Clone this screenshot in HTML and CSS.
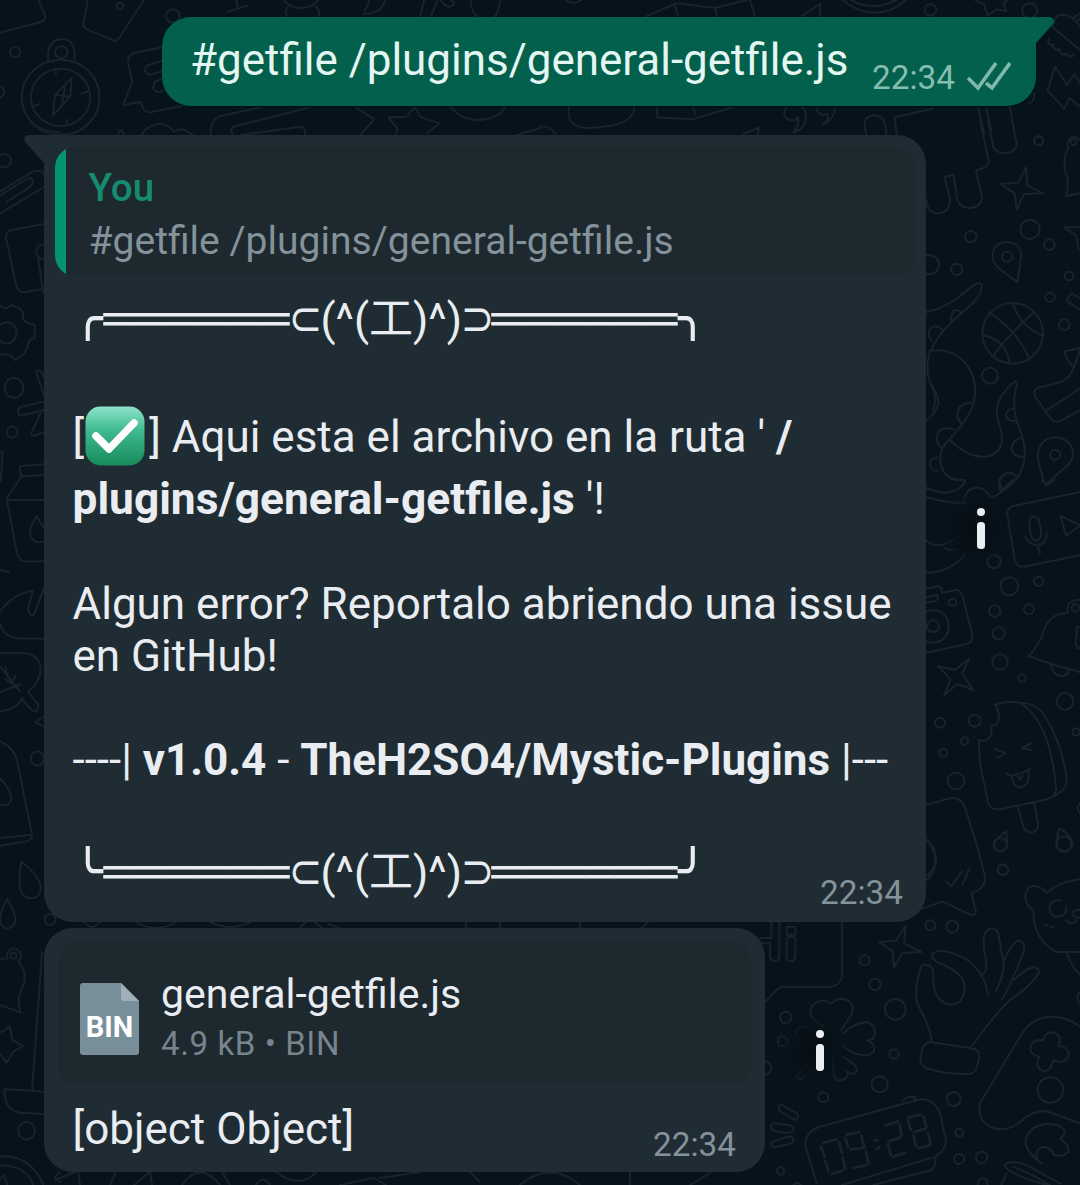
FILE: index.html
```html
<!DOCTYPE html>
<html lang="es">
<head>
<meta charset="utf-8">
<title>Chat</title>
<link rel="stylesheet" href="styles.css">
</head>
<body>
<svg class="wallpaper" viewBox="0 0 1080 1185" aria-hidden="true">
  <!-- top left: compass, speech bubble, notes -->
  <g transform="scale(.34436 .33333)">
    <path d="M0 98L118 66Q136 58 130 44L112 0M255 0L243 66Q240 82 252 88L330 122Q340 124 346 114L418 0M662 36L718 16M686 0L690 24M824 0Q840 24 874 24T924 0M832 48Q826 34 836 22M926 48Q930 34 918 20M1118 0Q1110 40 1056 42M1072 0Q1068 20 1058 30M1220 48L1232 0M1252 48L1270 0M1280 0Q1296 26 1312 18T1310 0M1366 0Q1370 40 1386 50M1452 0Q1448 40 1436 50"/>
    <circle cx="348" cy="18" r="10"/><circle cx="502" cy="48" r="20"/><circle cx="44" cy="157" r="15"/><circle cx="178" cy="157" r="18"/><circle cx="12" cy="482" r="20"/><circle cx="-6" cy="275" r="18"/>
    <circle cx="176" cy="292" r="113"/><circle cx="176" cy="292" r="86"/>
    <path d="M140 182Q134 120 178 118T216 182M208 234L160 284L153 346L204 290ZM160 284L204 290M188 262L180 318M162 206V222M238 280L256 274M194 358V374M98 318L116 312"/>
    <path d="M470 142L386 160Q370 166 372 188L384 246L358 314L410 306Q414 340 440 336L545 314M470 182L434 194Q418 200 422 214Q430 228 444 222L470 214M470 236L450 246Q440 262 450 272Q460 280 476 272"/>
    <path d="M612 405Q610 350 650 346L760 322M676 405Q664 384 686 378L900 322M700 405L870 380Q890 380 886 405M412 405Q430 370 470 372Q500 380 504 396Q530 378 560 405M342 405Q350 376 360 405M1034 322L1086 358L1046 405M1204 322L1180 350L1128 352L1154 386L1150 405M1204 322L1222 352L1276 370L1240 400M1310 322Q1340 360 1390 360Q1450 355 1466 322M1500 405L1568 385"/>
    <path d="M0 574L90 518Q124 500 136 540M0 640L130 560M18 606L86 562Q102 545 92 536Q84 530 70 542L0 586M128 672L34 690Q14 696 18 716L46 852Q52 880 74 876L128 866M128 732Q102 736 106 760Q116 780 128 776M110 770L126 880"/>
  </g>
  <!-- top right: star, mouse, cube, tabletop -->
  <g transform="translate(540) scale(.34436 .33333)">
    <path d="M310 48L396 10L508 24L600 0M390 10L400 44M508 24L514 48M610 0L624 48M760 48L814 12L812 48M880 0Q920 38 972 38T1062 0M904 0Q940 20 972 18T1034 0M1264 0L1290 14L1300 46L1326 28L1354 34L1346 8L1358 0M76 0Q96 18 120 0"/>
    <circle cx="1134" cy="30" r="17"/><circle cx="1422" cy="32" r="22"/><circle cx="1448" cy="423" r="13"/>
    <path d="M84 322Q74 384 142 384Q272 380 274 322M340 322L340 352L444 358L560 322M444 322L452 342M716 322Q698 350 726 360Q744 364 748 350Q756 372 736 398Q774 384 772 350Q772 326 760 322M802 322Q804 340 822 344L834 342Q842 360 820 374Q856 358 856 322M0 380Q24 374 46 402M590 402L638 382L632 402M948 402Q930 350 970 346Q1004 346 1006 402M1036 402L1030 352L1140 326M1420 310Q1440 300 1434 280"/>
    <path d="M1272 322L1290 400M1296 322L1310 390"/>
    <path d="M1488 80L1500 50Q1524 34 1550 58L1568 80M1488 80L1568 150M1478 118Q1470 136 1490 134Q1488 152 1508 148Q1510 168 1530 162Q1540 176 1552 164M1546 56L1568 40M1556 66L1568 56M1496 200L1474 272L1522 326L1538 294L1568 320M1496 200L1530 254L1552 222L1568 250"/>
  </g>
  <!-- right edge: location pins, ball, octopus -->
  <g transform="translate(920 120) scale(.33333)">
    <path d="M180 0L206 122Q204 140 190 144L168 152L186 232Q184 260 152 264Q120 264 112 240L100 164L74 170L90 240Q90 276 56 280Q20 280 20 240M204 0L220 80Q230 102 260 100Q290 94 290 70L276 0L270 -40"/>
    <path d="M318 142L322 196L368 220L312 222L290 268L284 220L242 192L296 188ZM480 322H432L468 346L476 390M480 60A18 18 0 1 0 446 84Q428 110 436 156Q450 180 438 228L480 220"/>
    <circle cx="461" cy="67" r="9"/><circle cx="356" cy="62" r="14"/><circle cx="330" cy="328" r="29"/><circle cx="152" cy="350" r="17"/><circle cx="388" cy="374" r="16"/><circle cx="110" cy="448" r="17"/><circle cx="28" cy="434" r="29"/><circle cx="447" cy="468" r="13"/><circle cx="390" cy="532" r="14"/><circle cx="433" cy="614" r="16"/><circle cx="210" cy="767" r="24"/><circle cx="261" cy="410" r="15"/><circle cx="405" cy="1004" r="15"/>
    <path d="M292 486L240 448Q214 424 218 400Q224 366 262 366Q300 368 304 406ZM376 1094Q350 1020 354 995Q366 952 408 952Q454 958 460 1000Q458 1024 436 1042Z"/>
    <circle cx="278" cy="640" r="91"/><path d="M208 578Q290 630 326 712M278 549Q300 620 370 648M340 578Q270 640 220 706M190 646Q260 660 268 730"/>
    <path d="M20 576Q90 560 146 506Q184 476 186 500Q184 530 140 566Q50 640 34 692Q100 684 142 736Q184 800 152 872Q130 916 90 956Q50 996 64 1040Q80 1084 130 1080Q142 1080 132 1090Q112 1118 70 1118Q36 1112 20 1104M30 692Q14 750 32 790Q52 820 56 850Q48 880 20 900M30 790Q54 830 40 870M90 960Q150 1020 210 1008Q258 990 242 926Q220 870 240 836Q270 790 286 784Q294 790 286 810Q274 870 300 930Q330 1010 296 1068Q270 1104 218 1132M34 664Q20 640 32 624Q52 612 68 630M94 602Q92 570 110 570Q122 570 124 582M128 914Q100 890 120 860Q140 844 162 852M64 984Q40 960 56 934Q74 918 104 930M52 1054Q30 1050 30 1030Q34 1014 52 1012M290 902Q260 906 258 884Q264 864 280 868M310 1012Q280 1010 274 986Q278 960 302 954M240 1112Q230 1070 260 1060Q280 1056 290 1070M130 1150Q134 1110 162 1104Q194 1100 212 1132M20 1132Q80 1150 138 1150"/>
    <path d="M480 535L456 520Q440 530 442 545L480 568M480 684L434 694Q440 726 462 740Q480 700 480 684M462 740Q450 780 410 790L350 804Q340 812 346 830L376 874L480 806M376 874L398 902Q410 910 424 902L480 870"/>
  </g>
  <!-- voice note, camera, bell, ice pop -->
  <g transform="translate(920 480) scale(.33333)">
    <path d="M480 36L280 78Q258 86 262 104L284 240Q292 264 312 260L480 226M328 124Q330 106 346 110Q356 112 358 126L364 160Q362 180 350 182Q336 180 332 164ZM316 170Q326 196 352 196Q382 190 380 156M352 196L360 220M422 108L480 136L438 168ZM20 182Q50 210 100 180L150 140M20 278Q90 278 136 222M76 204Q86 214 104 208M236 0L246 30L280 0M366 0L380 16L404 0"/>
    <path d="M20 326L56 318Q66 322 66 338L110 330Q124 332 128 350L158 468Q158 486 140 492L20 518M20 352L50 344Q60 352 48 362L20 368M20 394Q60 380 82 416Q96 460 64 482Q40 492 20 484"/>
    <circle cx="39" cy="439" r="18"/><circle cx="98" cy="367" r="11"/><circle cx="222" cy="245" r="20"/><circle cx="268" cy="319" r="27"/><circle cx="356" cy="304" r="14"/><circle cx="224" cy="393" r="17"/><circle cx="327" cy="388" r="15"/><circle cx="236" cy="460" r="18"/><circle cx="240" cy="546" r="23"/><circle cx="306" cy="594" r="11"/><circle cx="435" cy="664" r="25"/><circle cx="468" cy="756" r="11"/><circle cx="60" cy="728" r="15"/><circle cx="164" cy="722" r="18"/><circle cx="134" cy="783" r="11"/><circle cx="70" cy="818" r="12"/><circle cx="108" cy="903" r="25"/><circle cx="248" cy="1169" r="16"/><circle cx="466" cy="384" r="11"/>
    <path d="M480 360Q440 356 442 400Q390 400 372 450Q356 500 326 528Q390 554 480 576M392 556Q400 590 426 588Q444 584 450 570M480 440Q462 440 472 466Q460 490 474 504H480M148 536L126 580L160 630L112 612L72 646L92 598L54 558L104 570Z"/>
    <path d="M226 674Q240 700 236 720Q230 736 214 738Q218 770 200 780Q188 784 176 780L180 850L204 968Q210 990 240 988L380 958Q410 948 408 924Q390 720 298 668Q260 662 226 674M298 668Q350 668 376 710Q430 800 440 900Q440 930 400 950M294 982L310 1040Q320 1062 340 1056Q356 1050 354 1030L342 968M224 806L256 820L232 834M334 790L306 804L334 810M260 880L272 888Q300 880 318 874L330 866M274 888Q280 924 304 922Q330 914 326 874M294 890L300 898L308 886M258 1054Q220 1084 222 1096Q228 1114 244 1114Q266 1106 262 1086ZM418 1046Q408 1074 410 1096Q418 1114 436 1114Q456 1108 458 1090Q450 1060 418 1046ZM20 974L84 956Q120 948 134 980L166 1080M20 1080Q50 1104 48 1140Q44 1170 20 1188M480 970Q466 985 480 1000"/>
  </g>
  <!-- bottom right: hand, clover, clock, gamepad -->
  <g transform="translate(760 840) scale(.33333)">
    <path d="M646 0L676 112Q676 146 634 160L648 216Q642 230 626 222L548 184L486 206M502 0Q530 40 526 70Q520 104 500 120M558 124L574 138L606 94M608 134L628 86"/>
    <path d="M246 244V410Q240 438 212 440H64Q40 456 16 486M0 294H34V246M58 246V350Q58 362 46 362Q30 362 30 350V310H0M80 260H106V284H80ZM80 298Q80 290 92 290Q106 290 106 298V350Q104 364 92 364Q78 360 80 350Z"/>
    <path d="M436 258L432 310L484 336L428 338L402 382L398 334L358 306L408 302Z"/>
    <circle cx="721" cy="14" r="20"/><circle cx="912" cy="12" r="23"/><circle cx="729" cy="90" r="15"/><circle cx="511" cy="256" r="15"/><circle cx="577" cy="260" r="18"/><circle cx="314" cy="361" r="15"/><circle cx="345" cy="433" r="17"/><circle cx="406" cy="508" r="31"/><circle cx="77" cy="532" r="17"/><circle cx="68" cy="604" r="15"/><circle cx="402" cy="642" r="14"/><circle cx="359" cy="733" r="24"/><circle cx="190" cy="772" r="15"/><circle cx="581" cy="777" r="21"/><circle cx="598" cy="878" r="12"/><circle cx="597" cy="957" r="15"/><circle cx="665" cy="952" r="17"/><circle cx="62" cy="993" r="11"/><circle cx="14" cy="684" r="20"/><circle cx="871" cy="750" r="38"/><circle cx="668" cy="1030" r="15"/>
    <path d="M514 606Q516 570 474 496Q460 460 480 390Q484 370 500 374Q516 376 520 396Q516 450 536 474Q570 510 602 482Q626 446 604 412Q580 384 530 366Q510 350 518 340Q540 324 590 344Q650 366 676 430L684 466M670 402Q684 390 676 350Q664 300 678 274Q698 254 714 276Q724 330 732 380Q726 420 708 452M732 362Q750 320 770 302Q796 300 792 330Q780 370 760 410Q744 450 726 478M764 418Q790 390 820 382Q840 384 836 400Q810 440 750 480Q690 540 636 618M510 606L630 624Q660 628 658 650L650 684Q644 702 624 702Q560 704 498 684Q478 672 482 650Q486 610 510 606Z"/>
    <path d="M214 492Q196 476 170 486Q140 506 158 536Q176 550 190 560M214 492Q230 470 262 480Q290 500 270 530L244 570M250 580Q280 550 320 546Q350 556 344 586Q340 598 322 602Q346 610 342 634Q326 652 290 642Q260 630 246 616M250 650L280 672Q300 690 282 700Q270 704 262 694Q270 716 236 722Q216 716 220 680V640M160 570Q110 550 108 580Q110 596 122 602Q100 610 106 626Q124 640 150 628M150 670L108 710L120 720L164 686"/>
    <path d="M860 158L850 148Q800 120 796 170Q800 200 820 212Q820 300 890 336H960M860 158Q900 124 960 118M918 200A25 25 0 1 1 902 182M960 210Q936 208 938 226Q950 236 960 232M918 240Q932 260 950 240M852 256H862M872 260H882M920 338Q934 380 960 404M960 456Q944 470 960 492"/>
    <path d="M960 560Q920 528 868 530Q810 536 780 590L660 790Q650 846 700 864Q740 876 780 846Q830 800 880 820L960 850M850 600C854 582 868 572 886 580C902 588 902 600 896 618C918 620 932 634 924 650C914 668 898 670 880 660C874 686 864 698 846 692C828 684 830 668 838 650C818 648 806 632 814 614C822 598 836 600 850 600M844 970Q790 930 798 896Q814 850 870 852Q914 856 914 880Q910 892 900 896Q930 914 924 936Q906 954 882 944Q872 922 852 920Q830 924 828 948Q832 962 844 970M724 1035L740 1000M734 976Q750 956 800 976L900 1030M734 976Q740 1000 860 1035M760 980Q810 1000 870 1035"/>
    <path d="M170 1030L136 916Q134 880 174 862L480 778Q520 774 540 820L558 900Q560 930 526 950L246 1035M430 782Q434 770 464 770L468 780M526 950Q530 990 500 994L340 1035M56 796Q64 790 74 800L110 820Q120 832 110 838Q96 840 84 828L58 812ZM40 850L90 856Q106 864 98 876Q80 880 40 872Q24 860 40 850ZM36 906L90 888Q106 896 96 910L46 922Q28 920 36 906ZM100 1035Q112 1024 124 1035"/>
    <path class="digits" d="M190 908L230 898M182 918L194 950M238 908L246 940M196 964L206 996M248 952L256 986M214 1002L248 992M260 884L298 876M256 894L264 920M304 886L314 924M272 928L308 924M318 936L326 970M282 984L318 976M344 902L352 900M350 926L358 922M376 856L414 844M420 854L424 886M386 904L420 892M384 912L392 944M400 950L436 938M446 832L482 824M444 842L452 870M490 830L500 862M462 876L496 866M460 886L468 920M504 880L512 912M476 924L510 916"/>
  </g>
  <!-- left edge: photo frame, gear, carton, leaf -->
  <g transform="translate(0 120) scale(.33333 .35714)">
    <path d="M90 0Q110 30 180 34M0 520Q18 536 34 518L60 528L70 540Q64 556 80 568L104 574V610Q82 614 84 634L70 658L44 672Q30 650 0 658M132 720Q118 690 108 706L132 770M132 788L60 804Q48 814 60 828L132 812M122 820L94 876Q94 886 104 884L132 874M132 964L66 968Q56 970 60 980L64 998L132 994M64 998L20 1060L50 1210Q56 1236 76 1236H132M20 1064H132M0 930H8L2 1012M110 1110Q84 1146 92 1166Q102 1184 122 1182L132 1180M110 1110L130 1140M0 1260L28 1266M0 1376Q40 1326 98 1318L84 1370Q88 1390 102 1386L132 1310M0 1410Q12 1450 60 1452H132"/>
    <circle cx="20" cy="596" r="30"/><circle cx="42" cy="750" r="28"/><circle cx="37" cy="874" r="16"/>
  </g>
  <g transform="translate(0 640) scale(.33333 .34758)">
    <path d="M0 38H80Q120 46 122 86Q120 120 84 150L112 182Q120 200 104 206Q92 204 66 168Q50 200 0 206M0 150L60 128M46 102L36 126L16 112M0 76L60 148M16 76L22 104M132 220L106 236L132 250M0 290Q46 314 52 350L96 560Q98 576 76 580L0 592M0 570L96 560M0 398Q34 430 34 460Q24 480 0 474M64 638Q54 690 62 722Q76 748 100 742Q124 738 122 706Q110 670 64 638ZM22 746Q0 780 0 806Q4 830 24 830Q46 824 46 800Q40 770 22 746M0 918L22 916A21 21 0 1 1 54 926Q80 950 72 990Q46 1034 62 1072L0 1050M0 1130L30 1112L36 1150L68 1168L40 1184L20 1216L0 1190M126 900L96 1296M132 1300L14 1292Q10 1350 60 1360L132 1364M0 1486Q90 1480 130 1568M0 1512Q80 1512 100 1568M0 1550L12 1540L22 1568M180 1530L164 1546L180 1560"/>
    <circle cx="112" cy="341" r="20"/><circle cx="150" cy="804" r="16"/><circle cx="40" cy="908" r="9"/><circle cx="80" cy="1412" r="25"/>
  </g>
  <!-- slivers between and under the bubbles -->
  <path d="M84 922Q92 932 100 922M136 922Q156 934 176 922M210 922Q230 932 250 922M300 928L310 918L322 928M328 924L340 928M466 920V930M500 920V930M580 920V930M640 930L650 920M55 1180L78 1171L80 1185M110 1185L116 1172M134 1185L150 1172L152 1185M182 1185Q200 1160 220 1185M222 1172L230 1185M256 1185Q262 1174 270 1185M276 1172Q300 1190 316 1172M340 1185L374 1178L386 1185M380 1178L420 1172M470 1172L480 1182M520 1185Q550 1160 580 1185M630 1172V1185M690 1185L710 1173"/>
  <defs><radialGradient id="halo"><stop offset="0" stop-color="#080d14"/><stop offset=".55" stop-color="#080f17" stop-opacity=".75"/><stop offset="1" stop-color="#06131a" stop-opacity="0"/></radialGradient></defs>
  <g class="halo"><circle cx="974" cy="529" r="38"/><circle cx="813" cy="1051" r="38"/></g>
</svg>

<main class="chat">
  <section class="row row-out">
    <div class="bubble bubble-out">
      <svg class="tail tail-out" viewBox="0 0 24 34"><path d="M0 0H18Q24 2 21 7L4 26V34H0Z"/></svg>
      <p class="command">#getfile /plugins/general-getfile.js</p>
      <span class="time time-out">22:34</span>
      <svg class="ticks" viewBox="0 0 44 29"><path d="M1 16L11 26L29 1M19 21L25 26L43 1"/></svg>
    </div>
  </section>

  <section class="row row-text">
    <article class="bubble bubble-in bubble-text">
      <svg class="tail tail-in" viewBox="0 0 24 34"><path d="M24 0H4Q-2 2 2 8L20 28V34H24Z"/></svg>
      <blockquote class="quote">
        <strong class="quote-author">You</strong>
        <span class="quote-text">#getfile /plugins/general-getfile.js</span>
      </blockquote>
      <div class="message">
        <div class="banner"><span class="corner corner-top">╭</span><span class="rule">══════</span><span class="face"><span class="horn">⊂</span><span>(^(</span><span class="nose">工</span><span>)^)</span><span class="horn">⊃</span></span><span class="rule">══════</span><span class="corner corner-top">╮</span></div>
        <p class="path">[<svg class="emoji" viewBox="0 0 60 60" role="img" aria-label="✅"><defs><linearGradient id="g" x2="0" y2="1"><stop offset="0" stop-color="#8ee4cb"/><stop offset=".4" stop-color="#3fba91"/><stop offset="1" stop-color="#168b59"/></linearGradient></defs><rect x=".5" y=".5" width="59" height="59" rx="15" fill="url(#g)"/><path d="M11 30L24 43L49 17" fill="none" stroke="#fff" stroke-width="7.5" stroke-linecap="round" stroke-linejoin="round"/></svg>] Aqui esta el archivo en la ruta ' <b>/</b><br><b>plugins/general-getfile.js</b> '!</p>
        <p class="issue">Algun error? Reportalo abriendo una issue<br>en GitHub!</p>
        <p class="version">----| <b>v1.0.4</b> - <b>TheH2SO4/Mystic-Plugins</b> |---</p>
        <div class="banner"><span class="corner corner-bottom">╰</span><span class="rule">══════</span><span class="face"><span class="horn">⊂</span><span>(^(</span><span class="nose">工</span><span>)^)</span><span class="horn">⊃</span></span><span class="rule">══════</span><span class="corner corner-bottom">╯</span></div>
      </div>
      <span class="time time-in">22:34</span>
    </article>
    <svg class="info" viewBox="0 0 10 42" role="img" aria-label="Info"><circle cx="5" cy="4" r="4"/><rect x="1" y="14" width="8" height="27" rx="3.5"/></svg>
  </section>

  <section class="row row-file">
    <article class="bubble bubble-in bubble-file">
      <div class="file">
        <div class="file-icon">
          <svg viewBox="0 0 59 72"><path d="M3 0H41L59 18V69Q59 72 56 72H3Q0 72 0 69V3Q0 0 3 0Z" fill="#788f9a"/><path d="M41 0L59 18H44Q41 18 41 15Z" fill="#9fb0b8"/></svg>
          <span class="file-ext">BIN</span>
        </div>
        <div class="file-info">
          <span class="file-name">general-getfile.js</span>
          <span class="file-meta">4.9 kB • BIN</span>
        </div>
      </div>
      <div class="caption">
        <p>[object Object]</p>
        <span class="time">22:34</span>
      </div>
    </article>
    <svg class="info" viewBox="0 0 10 42" role="img" aria-label="Info"><circle cx="5" cy="4" r="4"/><rect x="1" y="14" width="8" height="27" rx="3.5"/></svg>
  </section>
</main>
</body>
</html>
```
FILE: styles.css
```css
* { box-sizing: border-box; }
html, body { margin: 0; width: 1080px; height: 1185px; overflow: hidden; }
body {
  background: #06131a;
  color: #e9edf2;
  font-family: Roboto, "Noto Sans CJK SC", sans-serif;
  font-size: 44px;
  line-height: 52px;
}
p { margin: 0; }
b { font-weight: 700; }

.wallpaper { position: absolute; inset: 0; width: 1080px; height: 1185px; }
.wallpaper path, .wallpaper circle {
  fill: none;
  stroke: #17242b;
  stroke-width: 2;
  stroke-linecap: round;
  stroke-linejoin: round;
  vector-effect: non-scaling-stroke;
}
.wallpaper .digits { stroke-width: 2.8; }
.wallpaper .halo circle { fill: url(#halo); stroke: none; }

.chat { position: relative; display: flex; flex-direction: column; padding-top: 17px; }
.row { display: flex; }
.bubble { position: relative; border-radius: 29px; white-space: nowrap; }
.tail { position: absolute; top: 0; width: 24px; height: 34px; }

.row-out { justify-content: flex-end; padding-right: 44px; }
.bubble-out {
  display: flex;
  width: 874px;
  height: 89px;
  padding-left: 28px;
  background: #02604d;
  border-top-right-radius: 0;
  box-shadow: 0 1px 1px #02120f;
}
.tail-out { right: -20px; fill: #02604d; }
.command { width: 682px; padding-top: 17px; color: #e4f6f2; font-size: 43.95px; }
.time { color: #84929b; font-size: 33.3px; line-height: 40px; }
.time-out { width: 95px; padding-top: 41px; color: #86bdb1; }
.ticks {
  width: 44px;
  height: 29px;
  margin-top: 45px;
  fill: none;
  stroke: #7fb9ad;
  stroke-width: 3.6;
}

.row-text { align-items: center; gap: 50px; margin-top: 29px; padding-left: 44px; }
.bubble-in { background: #202c33; }
.bubble-text { width: 882px; height: 787px; padding: 11px; border-top-left-radius: 0; }
.tail-in { left: -20px; fill: #202c33; }
.quote {
  display: flex;
  flex-direction: column;
  height: 131px;
  margin: 0;
  padding: 16px 33.5px 0;
  overflow: hidden;
  border-radius: 22px;
  background: linear-gradient(to right, #059473 11px, #1e282f 11px);
}
.quote-author { color: #158c70; font-size: 38.5px; font-weight: 500; line-height: 52px; }
.quote-text { color: #84929b; font-size: 39.05px; line-height: 54px; }

.message { padding: 17px 0 0 17.5px; }
.banner { display: flex; height: 52px; }
.corner { width: 31px; height: 52px; font-family: "DejaVu Sans", sans-serif; font-size: 51.5px; line-height: 49px; }
.corner-top { clip-path: inset(0 0 5px 0); }
.corner-bottom { clip-path: inset(-1px 0 0 0); }
.rule { width: 186px; font-family: "Liberation Mono", monospace; font-size: 51.65px; line-height: 56px; }
.face { display: flex; justify-content: space-between; width: 202px; }
.nose { font-family: "Noto Sans CJK SC", sans-serif; line-height: 42px; }
.horn {
  display: flex;
  justify-content: center;
  width: 31px;
  height: 50px;
  font-family: "DejaVu Sans", sans-serif;
  font-size: 42px;
  line-height: 50px;
  transform: scale(.95, 1.15);
}
.path { margin-top: 60px; line-height: 62px; }
.path b { font-size: 44.25px; }
.emoji { width: 60px; height: 60px; margin: 0 4px 0 1px; vertical-align: -14px; }
.issue { margin-top: 48px; }
.version { margin: 52px 0 61px; }
.time-in { position: absolute; right: 23px; bottom: 9px; }

.info { width: 10px; height: 42px; fill: #eceff1; }

.row-file { align-items: center; gap: 50px; margin-top: 6px; padding-left: 44px; }
.row-file .info { margin-top: 2px; }
.bubble-file { width: 721px; height: 244px; padding: 14px; }
.file {
  display: flex;
  gap: 22px;
  height: 143px;
  padding-left: 22px;
  border-radius: 20px;
  background: #1e282f;
}
.file-icon { position: relative; width: 59px; height: 72px; margin-top: 41px; }
.file-icon svg { display: block; width: 59px; height: 72px; }
.file-ext {
  position: absolute;
  top: 24px;
  left: 0;
  width: 59px;
  color: #fff;
  font-size: 29px;
  font-weight: 700;
  line-height: 40px;
  text-align: center;
}
.file-info { display: flex; flex-direction: column; padding-top: 26px; }
.file-name { font-size: 41px; line-height: 52px; }
.file-meta { color: #76848d; font-size: 33px; line-height: 48px; letter-spacing: .6px; }
.caption { display: flex; justify-content: space-between; padding: 18px 15px 0 14.5px; }
.caption .time { padding-top: 22px; }
```
